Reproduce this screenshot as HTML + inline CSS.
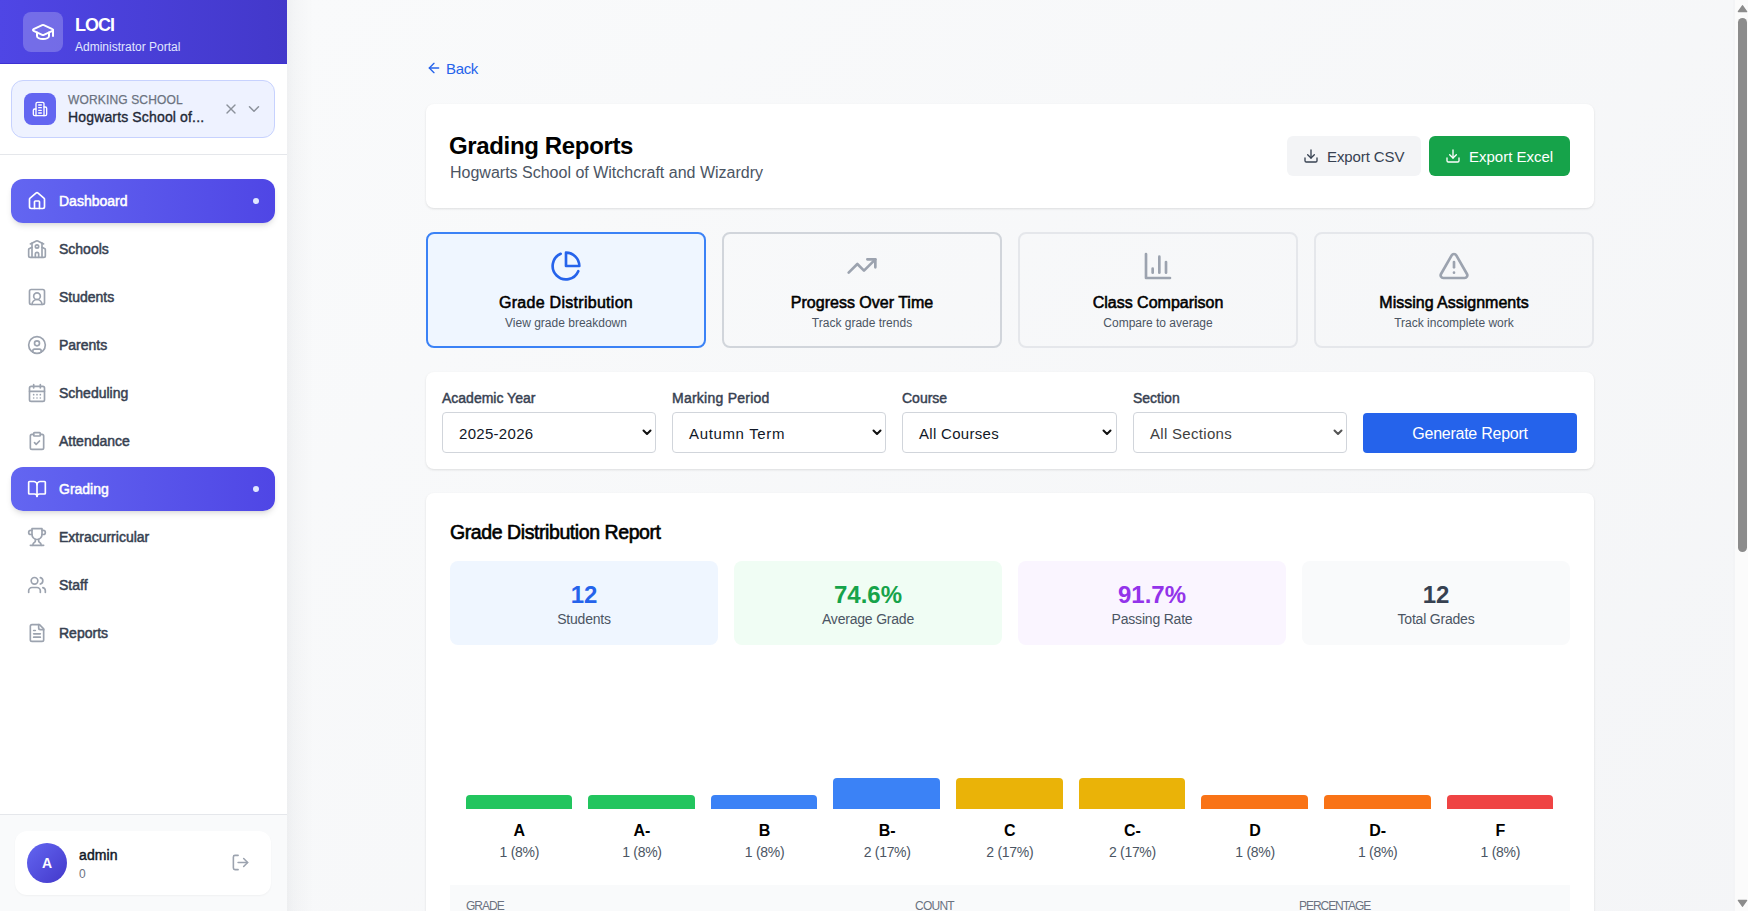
<!DOCTYPE html>
<html><head><meta charset="utf-8">
<style>
*{box-sizing:border-box;margin:0;padding:0}
html,body{width:1748px;height:911px;overflow:hidden}
body{font-family:"Liberation Sans",sans-serif;background:#f3f4f6;position:relative;color:#111827}
.abs{position:absolute}
svg{display:block}
/* sidebar */
#sb{position:absolute;left:0;top:0;width:287px;height:911px;background:#fff}
#sbs{position:absolute;left:287px;top:0;width:27px;height:911px;background:linear-gradient(90deg,rgba(17,24,39,.045),rgba(17,24,39,.022) 25%,rgba(17,24,39,.01) 60%,rgba(17,24,39,0))}
#sbh{position:absolute;left:0;top:0;width:287px;height:64px;background:linear-gradient(90deg,#4f46e5,#4338ca);border-bottom:1px solid #3d31d2}
#logo{position:absolute;left:23px;top:12px;width:40px;height:40px;border-radius:8px;background:rgba(255,255,255,.22)}
.t{position:absolute;white-space:nowrap;line-height:1}
#ws{position:absolute;left:11px;top:80px;width:264px;height:58px;border-radius:12px;background:#eef2ff;border:1px solid #c7d2fe}
#wsi{position:absolute;left:12px;top:12px;width:32px;height:32px;border-radius:8px;background:#6366f1}
.sep{position:absolute;left:0;width:287px;height:1px;background:#e5e7eb}
.nav{position:absolute;left:11px;width:264px;height:44px;border-radius:12px}
.nav.act{background:linear-gradient(90deg,#6366f1,#4f46e5);box-shadow:0 4px 6px -1px rgba(0,0,0,.1),0 2px 4px -2px rgba(0,0,0,.1)}
.nav .ic{position:absolute;left:16px;top:12px;width:20px;height:20px}
.nav .lb{position:absolute;left:48px;top:15px;font-size:14px;font-weight:400;letter-spacing:0px;-webkit-text-stroke:0.5px currentColor;color:#374151;white-space:nowrap;line-height:14px}
.nav.act .lb{color:#fff}
.nav .dot{position:absolute;left:242px;top:19px;width:6px;height:6px;border-radius:3px;background:#e0e7ff}

#main{position:absolute;left:0;top:0;width:1748px;height:911px}
#bgg{position:absolute;left:287px;top:0;width:1446px;height:1523px;background:linear-gradient(to bottom right,#f9fafb,#f3f4f6)}
.card{position:absolute;left:426px;width:1168px;background:#fff;border-radius:8px;box-shadow:0 1px 3px rgba(0,0,0,.08),0 1px 2px rgba(0,0,0,.04)}
#main .abs, #main .t, #main .card, #main .rt{}
.btn{position:absolute;height:40px;border-radius:6px}
.rt{position:absolute;top:232px;width:280px;height:116px;border:2px solid #e5e7eb;border-radius:8px;background:transparent}
.rt.act{border-color:#3b82f6;background:#eff6ff}
.rti{position:absolute;left:122px;top:16px;width:32px;height:32px}
.rtt{position:absolute;left:0;top:61px;width:276px;text-align:center;font-size:16px;font-weight:400;letter-spacing:0px;-webkit-text-stroke:0.55px #000;color:#000;line-height:16px;white-space:nowrap}
.rts{position:absolute;left:0;top:83px;width:276px;text-align:center;font-size:12px;color:#4b5563;line-height:12px;white-space:nowrap}
.lbl{position:absolute;top:19px;font-size:14px;font-weight:400;letter-spacing:0px;-webkit-text-stroke:0.45px #374151;color:#374151;line-height:14px;white-space:nowrap}
.sel{position:absolute;top:40px;width:214px;height:41px;border:1px solid #d1d5db;border-radius:4px;background:#fff;font-size:15px;color:#111827;padding:13px 0 0 16px;line-height:16px;white-space:nowrap;letter-spacing:0.3px}
.chev{position:absolute;left:199px;top:16px;width:10px;height:7px}
.st{position:absolute;top:68px;width:268px;height:84px;border-radius:8px}
.sn{position:absolute;left:0;top:22px;width:268px;text-align:center;font-size:24px;font-weight:700;line-height:24px}
.sl{position:absolute;left:0;top:51px;width:268px;text-align:center;font-size:14px;color:#4b5563;line-height:14px;letter-spacing:-0.2px}
.bar{position:absolute;border-radius:4px 4px 0 0}
.bl{top:330px;text-align:center;font-size:16px;font-weight:700;color:#000}
.bc{top:352px;text-align:center;font-size:14px;color:#4b5563;letter-spacing:-0.3px}
</style></head><body>
<div id="sb">
  <div id="sbh">
    <div id="logo">
      <svg class="abs" style="left:8px;top:8px" width="24" height="24" viewBox="0 0 24 24" fill="none" stroke="#fff" stroke-width="2" stroke-linecap="round" stroke-linejoin="round"><path d="M21.42 10.922a1 1 0 0 0-.019-1.838L12.83 5.18a2 2 0 0 0-1.66 0L2.6 9.08a1 1 0 0 0 0 1.832l8.57 3.908a2 2 0 0 0 1.66 0z"/><path d="M22 10v6"/><path d="M6 12.5V16a6 3 0 0 0 12 0v-3.5"/></svg>
    </div>
    <div class="t" style="left:75px;top:16px;font-size:18px;font-weight:700;color:#fff;letter-spacing:-1px">LOCI</div>
    <div class="t" style="left:75px;top:41px;font-size:12px;color:#e0e7ff">Administrator Portal</div>
  </div>
  <div id="ws">
    <div id="wsi"><svg class="abs" style="left:8px;top:8px" width="16" height="16" viewBox="0 0 24 24" fill="none" stroke="#fff" stroke-width="2" stroke-linecap="round" stroke-linejoin="round"><path d="M6 22V4a2 2 0 0 1 2-2h8a2 2 0 0 1 2 2v18Z"/><path d="M6 12H4a2 2 0 0 0-2 2v6a2 2 0 0 0 2 2h2"/><path d="M18 9h2a2 2 0 0 1 2 2v9a2 2 0 0 1-2 2h-2"/><path d="M10 6h4"/><path d="M10 10h4"/><path d="M10 14h4"/><path d="M10 18h4"/></svg></div>
    <svg class="abs" style="left:211px;top:20px" width="16" height="16" viewBox="0 0 24 24" fill="none" stroke="#8b919b" stroke-width="2" stroke-linecap="round" stroke-linejoin="round"><path d="M18 6 6 18"/><path d="m6 6 12 12"/></svg>
    <svg class="abs" style="left:233px;top:19px" width="18" height="18" viewBox="0 0 24 24" fill="none" stroke="#8b919b" stroke-width="2" stroke-linecap="round" stroke-linejoin="round"><path d="m6 9 6 6 6-6"/></svg>
    <div class="t" style="left:56px;top:13px;font-size:12px;color:#6b7280;letter-spacing:.15px;-webkit-text-stroke:0.25px #6b7280">WORKING SCHOOL</div>
    <div class="t" style="left:56px;top:29px;font-size:14px;font-weight:400;color:#1f2937;letter-spacing:0.15px;-webkit-text-stroke:0.35px #1f2937">Hogwarts School of...</div>
  </div>
  <div class="sep" style="top:154px"></div>
  <div class="nav act" style="top:179px"><svg class="ic" viewBox="0 0 24 24" fill="none" stroke="#fff" stroke-width="2" stroke-linecap="round" stroke-linejoin="round"><path d="M15 21v-8a1 1 0 0 0-1-1h-4a1 1 0 0 0-1 1v8"/><path d="M3 10a2 2 0 0 1 .709-1.528l7-5.999a2 2 0 0 1 2.582 0l7 5.999A2 2 0 0 1 21 10v9a2 2 0 0 1-2 2H5a2 2 0 0 1-2-2z"/></svg><div class="lb">Dashboard</div><div class="dot"></div></div>
  <div class="nav" style="top:227px"><svg class="ic" viewBox="0 0 24 24" fill="none" stroke="#9ca3af" stroke-width="2" stroke-linecap="round" stroke-linejoin="round"><path d="M14 22v-4a2 2 0 1 0-4 0v4"/><path d="m18 10 3.447 1.724a1 1 0 0 1 .553.894V20a2 2 0 0 1-2 2H4a2 2 0 0 1-2-2v-7.382a1 1 0 0 1 .553-.894L6 10"/><path d="M18 5v17"/><path d="m4 6 7.106-3.553a2 2 0 0 1 1.788 0L20 6"/><path d="M6 5v17"/><circle cx="12" cy="9" r="2"/></svg><div class="lb">Schools</div></div>
  <div class="nav" style="top:275px"><svg class="ic" viewBox="0 0 24 24" fill="none" stroke="#9ca3af" stroke-width="2" stroke-linecap="round" stroke-linejoin="round"><path d="M18 21a6 6 0 0 0-12 0"/><circle cx="12" cy="11" r="4"/><rect width="18" height="18" x="3" y="3" rx="2"/></svg><div class="lb">Students</div></div>
  <div class="nav" style="top:323px"><svg class="ic" viewBox="0 0 24 24" fill="none" stroke="#9ca3af" stroke-width="2" stroke-linecap="round" stroke-linejoin="round"><circle cx="12" cy="12" r="10"/><circle cx="12" cy="10" r="3"/><path d="M7 20.662V19a2 2 0 0 1 2-2h6a2 2 0 0 1 2 2v1.662"/></svg><div class="lb">Parents</div></div>
  <div class="nav" style="top:371px"><svg class="ic" viewBox="0 0 24 24" fill="none" stroke="#9ca3af" stroke-width="2" stroke-linecap="round" stroke-linejoin="round"><path d="M8 2v4"/><path d="M16 2v4"/><rect width="18" height="18" x="3" y="4" rx="2"/><path d="M3 10h18"/><path d="M8 14h.01"/><path d="M12 14h.01"/><path d="M16 14h.01"/><path d="M8 18h.01"/><path d="M12 18h.01"/><path d="M16 18h.01"/></svg><div class="lb">Scheduling</div></div>
  <div class="nav" style="top:419px"><svg class="ic" viewBox="0 0 24 24" fill="none" stroke="#9ca3af" stroke-width="2" stroke-linecap="round" stroke-linejoin="round"><rect width="8" height="4" x="8" y="2" rx="1" ry="1"/><path d="M16 4h2a2 2 0 0 1 2 2v14a2 2 0 0 1-2 2H6a2 2 0 0 1-2-2V6a2 2 0 0 1 2-2h2"/><path d="m9 14 2 2 4-4"/></svg><div class="lb">Attendance</div></div>
  <div class="nav act" style="top:467px"><svg class="ic" viewBox="0 0 24 24" fill="none" stroke="#fff" stroke-width="2" stroke-linecap="round" stroke-linejoin="round"><path d="M12 7v14"/><path d="M3 18a1 1 0 0 1-1-1V4a1 1 0 0 1 1-1h5a4 4 0 0 1 4 4 4 4 0 0 1 4-4h5a1 1 0 0 1 1 1v13a1 1 0 0 1-1 1h-6a3 3 0 0 0-3 3 3 3 0 0 0-3-3z"/></svg><div class="lb">Grading</div><div class="dot"></div></div>
  <div class="nav" style="top:515px"><svg class="ic" viewBox="0 0 24 24" fill="none" stroke="#9ca3af" stroke-width="2" stroke-linecap="round" stroke-linejoin="round"><path d="M6 9H4.5a2.5 2.5 0 0 1 0-5H6"/><path d="M18 9h1.5a2.5 2.5 0 0 0 0-5H18"/><path d="M4 22h16"/><path d="M10 14.66V17c0 .55-.47.98-.97 1.21C7.85 18.75 7 20.24 7 22"/><path d="M14 14.66V17c0 .55.47.98.97 1.21C16.15 18.75 17 20.24 17 22"/><path d="M18 2H6v7a6 6 0 0 0 12 0V2Z"/></svg><div class="lb">Extracurricular</div></div>
  <div class="nav" style="top:563px"><svg class="ic" viewBox="0 0 24 24" fill="none" stroke="#9ca3af" stroke-width="2" stroke-linecap="round" stroke-linejoin="round"><path d="M16 21v-2a4 4 0 0 0-4-4H6a4 4 0 0 0-4 4v2"/><circle cx="9" cy="7" r="4"/><path d="M22 21v-2a4 4 0 0 0-3-3.87"/><path d="M16 3.13a4 4 0 0 1 0 7.75"/></svg><div class="lb">Staff</div></div>
  <div class="nav" style="top:611px"><svg class="ic" viewBox="0 0 24 24" fill="none" stroke="#9ca3af" stroke-width="2" stroke-linecap="round" stroke-linejoin="round"><path d="M15 2H6a2 2 0 0 0-2 2v16a2 2 0 0 0 2 2h12a2 2 0 0 0 2-2V7Z"/><path d="M14 2v4a2 2 0 0 0 2 2h4"/><path d="M10 9H8"/><path d="M16 13H8"/><path d="M16 17H8"/></svg><div class="lb">Reports</div></div>
  <div class="abs" style="left:0;top:814px;width:287px;height:97px;background:#f9fafb;border-top:1px solid #e5e7eb">
  </div>

<!-- user card -->
<div class="abs" style="left:15px;top:831px;width:256px;height:64px;background:#fff;border-radius:12px;box-shadow:0 1px 2px rgba(0,0,0,.04)">
  <div class="abs" style="left:12px;top:12px;width:40px;height:40px;border-radius:20px;background:linear-gradient(135deg,#6366f1,#4338ca)"></div>
  <div class="t" style="left:12px;top:25px;width:40px;text-align:center;font-size:14px;font-weight:700;color:#fff">A</div>
  <div class="t" style="left:64px;top:17px;font-size:14px;font-weight:400;color:#111827;letter-spacing:0.1px;-webkit-text-stroke:0.45px #111827">admin</div>
  <div class="t" style="left:64px;top:37px;font-size:12px;color:#6b7280">0</div>
  <svg class="abs" style="left:216px;top:22px" width="19" height="19" viewBox="0 0 24 24" fill="none" stroke="#9ca3af" stroke-width="2" stroke-linecap="round" stroke-linejoin="round"><path d="M9 21H5a2 2 0 0 1-2-2V5a2 2 0 0 1 2-2h4"/><polyline points="16 17 21 12 16 7"/><line x1="21" x2="9" y1="12" y2="12"/></svg>
</div>
</div>
<!-- main -->
<div id="bgg"></div>
<div id="sbs"></div>
<div id="main">
  <svg class="abs" style="left:426px;top:60px" width="16" height="16" viewBox="0 0 24 24" fill="none" stroke="#2563eb" stroke-width="2" stroke-linecap="round" stroke-linejoin="round"><path d="m12 19-7-7 7-7"/><path d="M19 12H5"/></svg>
  <div class="t" style="left:446px;top:61px;font-size:15px;color:#2563eb;letter-spacing:-0.35px">Back</div>

  <div class="card" style="top:104px;height:104px">
    <div class="t" style="left:23px;top:30px;font-size:24px;font-weight:700;color:#000;letter-spacing:-0.35px">Grading Reports</div>
    <div class="t" style="left:24px;top:61px;font-size:16px;color:#4b5563">Hogwarts School of Witchcraft and Wizardry</div>
    <div class="btn" style="left:861px;top:32px;width:134px;background:#f3f4f6;color:#374151">
      <svg class="abs" style="left:16px;top:12px" width="16" height="16" viewBox="0 0 24 24" fill="none" stroke="#374151" stroke-width="2" stroke-linecap="round" stroke-linejoin="round"><path d="M21 15v4a2 2 0 0 1-2 2H5a2 2 0 0 1-2-2v-4"/><polyline points="7 10 12 15 17 10"/><line x1="12" x2="12" y1="15" y2="3"/></svg>
      <div class="t" style="left:40px;top:13px;font-size:15px;letter-spacing:-0.1px">Export CSV</div>
    </div>
    <div class="btn" style="left:1003px;top:32px;width:141px;background:#16a34a;color:#fff">
      <svg class="abs" style="left:16px;top:12px" width="16" height="16" viewBox="0 0 24 24" fill="none" stroke="#fff" stroke-width="2" stroke-linecap="round" stroke-linejoin="round"><path d="M21 15v4a2 2 0 0 1-2 2H5a2 2 0 0 1-2-2v-4"/><polyline points="7 10 12 15 17 10"/><line x1="12" x2="12" y1="15" y2="3"/></svg>
      <div class="t" style="left:40px;top:13px;font-size:15px;letter-spacing:0px">Export Excel</div>
    </div>
  </div>

  <div class="rt act" style="left:426px">
    <svg class="rti" viewBox="0 0 24 24" fill="none" stroke="#2563eb" stroke-width="2" stroke-linecap="round" stroke-linejoin="round"><path d="M21.21 15.89A10 10 0 1 1 8 2.83"/><path d="M22 12A10 10 0 0 0 12 2v10z"/></svg>
    <div class="rtt" style="letter-spacing:0.28px">Grade Distribution</div><div class="rts">View grade breakdown</div>
  </div>
  <div class="rt" style="left:722px;border-color:#d1d5db">
    <svg class="rti" viewBox="0 0 24 24" fill="none" stroke="#9ca3af" stroke-width="2" stroke-linecap="round" stroke-linejoin="round"><polyline points="22 7 13.5 15.5 8.5 10.5 2 17"/><polyline points="16 7 22 7 22 13"/></svg>
    <div class="rtt">Progress Over Time</div><div class="rts">Track grade trends</div>
  </div>
  <div class="rt" style="left:1018px">
    <svg class="rti" viewBox="0 0 24 24" fill="none" stroke="#9ca3af" stroke-width="2" stroke-linecap="round" stroke-linejoin="round"><path d="M3 3v18h18"/><path d="M18 17V9"/><path d="M13 17V5"/><path d="M8 17v-3"/></svg>
    <div class="rtt">Class Comparison</div><div class="rts">Compare to average</div>
  </div>
  <div class="rt" style="left:1314px">
    <svg class="rti" viewBox="0 0 24 24" fill="none" stroke="#9ca3af" stroke-width="2" stroke-linecap="round" stroke-linejoin="round"><path d="m21.73 18-8-14a2 2 0 0 0-3.48 0l-8 14A2 2 0 0 0 4 21h16a2 2 0 0 0 1.73-3"/><path d="M12 9v4"/><path d="M12 17h.01"/></svg>
    <div class="rtt">Missing Assignments</div><div class="rts">Track incomplete work</div>
  </div>

  <div class="card" style="top:372px;height:97px">
    <div class="lbl" style="left:16px">Academic Year</div>
    <div class="sel" style="left:16px">2025-2026<svg class="chev" viewBox="0 0 10 7" fill="none" stroke="#111" stroke-width="2" stroke-linecap="round" stroke-linejoin="round"><polyline points="1.5,1.5 5,5 8.5,1.5"/></svg></div>
    <div class="lbl" style="left:246px;letter-spacing:0.25px">Marking Period</div>
    <div class="sel" style="left:246px;letter-spacing:0.65px">Autumn Term<svg class="chev" viewBox="0 0 10 7" fill="none" stroke="#111" stroke-width="2" stroke-linecap="round" stroke-linejoin="round"><polyline points="1.5,1.5 5,5 8.5,1.5"/></svg></div>
    <div class="lbl" style="left:476px">Course</div>
    <div class="sel" style="left:476px;width:215px">All Courses<svg class="chev" viewBox="0 0 10 7" fill="none" stroke="#111" stroke-width="2" stroke-linecap="round" stroke-linejoin="round"><polyline points="1.5,1.5 5,5 8.5,1.5"/></svg></div>
    <div class="lbl" style="left:707px">Section</div>
    <div class="sel" style="left:707px;color:#404040">All Sections<svg class="chev" viewBox="0 0 10 7" fill="none" stroke="#555" stroke-width="2" stroke-linecap="round" stroke-linejoin="round"><polyline points="1.5,1.5 5,5 8.5,1.5"/></svg></div>
    <div class="abs" style="left:937px;top:41px;width:214px;height:40px;border-radius:4px;background:#2563eb"><div class="t" style="left:0;top:13px;width:214px;text-align:center;font-size:16px;color:#fff;letter-spacing:-0.25px">Generate Report</div></div>
  </div>

  <div class="card" style="top:493px;height:430px">
    <div class="t" style="left:24px;top:30px;font-size:19.5px;font-weight:400;color:#000;letter-spacing:-0.42px;-webkit-text-stroke:0.6px #000">Grade Distribution Report</div>
    <div class="st" style="left:24px;background:#eff6ff"><div class="sn" style="color:#2563eb">12</div><div class="sl">Students</div></div>
    <div class="st" style="left:308px;background:#f0fdf4"><div class="sn" style="color:#16a34a">74.6%</div><div class="sl">Average Grade</div></div>
    <div class="st" style="left:592px;background:#faf5ff"><div class="sn" style="color:#9333ea">91.7%</div><div class="sl">Passing Rate</div></div>
    <div class="st" style="left:876px;background:#f9fafb"><div class="sn" style="color:#374151">12</div><div class="sl">Total Grades</div></div>
    
    <div class="bar" style="left:40px;top:302px;width:106px;height:14px;background:#22c55e"></div><div class="t bl" style="left:32.01px;width:122.6px">A</div><div class="t bc" style="left:32.01px;width:122.6px">1 (8%)</div><div class="bar" style="left:162px;top:302px;width:107px;height:14px;background:#22c55e"></div><div class="t bl" style="left:154.64px;width:122.6px">A-</div><div class="t bc" style="left:154.64px;width:122.6px">1 (8%)</div><div class="bar" style="left:285px;top:302px;width:106px;height:14px;background:#3b82f6"></div><div class="t bl" style="left:277.26px;width:122.6px">B</div><div class="t bc" style="left:277.26px;width:122.6px">1 (8%)</div><div class="bar" style="left:407px;top:285px;width:107px;height:31px;background:#3b82f6"></div><div class="t bl" style="left:399.89px;width:122.6px">B-</div><div class="t bc" style="left:399.89px;width:122.6px">2 (17%)</div><div class="bar" style="left:530px;top:285px;width:107px;height:31px;background:#eab308"></div><div class="t bl" style="left:522.51px;width:122.6px">C</div><div class="t bc" style="left:522.51px;width:122.6px">2 (17%)</div><div class="bar" style="left:653px;top:285px;width:106px;height:31px;background:#eab308"></div><div class="t bl" style="left:645.14px;width:122.6px">C-</div><div class="t bc" style="left:645.14px;width:122.6px">2 (17%)</div><div class="bar" style="left:775px;top:302px;width:107px;height:14px;background:#f97316"></div><div class="t bl" style="left:767.76px;width:122.6px">D</div><div class="t bc" style="left:767.76px;width:122.6px">1 (8%)</div><div class="bar" style="left:898px;top:302px;width:107px;height:14px;background:#f97316"></div><div class="t bl" style="left:890.39px;width:122.6px">D-</div><div class="t bc" style="left:890.39px;width:122.6px">1 (8%)</div><div class="bar" style="left:1021px;top:302px;width:106px;height:14px;background:#ef4444"></div><div class="t bl" style="left:1013.01px;width:122.6px">F</div><div class="t bc" style="left:1013.01px;width:122.6px">1 (8%)</div><div class="abs" style="left:24px;top:392px;width:1120px;height:60px;background:#f9fafb"></div>
    <div class="t" style="left:40px;top:407px;font-size:12px;color:#6b7280;letter-spacing:-1px">GRADE</div>
    <div class="t" style="left:489px;top:407px;font-size:12px;color:#6b7280;letter-spacing:-0.75px">COUNT</div>
    <div class="t" style="left:873px;top:407px;font-size:12px;color:#6b7280;letter-spacing:-1.05px">PERCENTAGE</div>
  </div>
</div>
<!-- scrollbar -->
<div class="abs" style="left:1735px;top:0;width:13px;height:911px;background:#fbfbfb"></div>
<svg class="abs" style="left:1737px;top:4px" width="11" height="9" viewBox="0 0 11 9"><path d="M5.5 1.8 L9.6 7.6 L1.4 7.6 Z" fill="#8c8c8c" stroke="#8c8c8c" stroke-width="1.4" stroke-linejoin="round"/></svg>
<div class="abs" style="left:1738px;top:18px;width:9px;height:534px;border-radius:5px;background:#8c8c8c"></div>
<svg class="abs" style="left:1737px;top:898px" width="11" height="10" viewBox="0 0 11 10"><path d="M1.4 2.4 L9.6 2.4 L5.5 8.2 Z" fill="#8c8c8c" stroke="#8c8c8c" stroke-width="1.4" stroke-linejoin="round"/></svg>

</body></html>
